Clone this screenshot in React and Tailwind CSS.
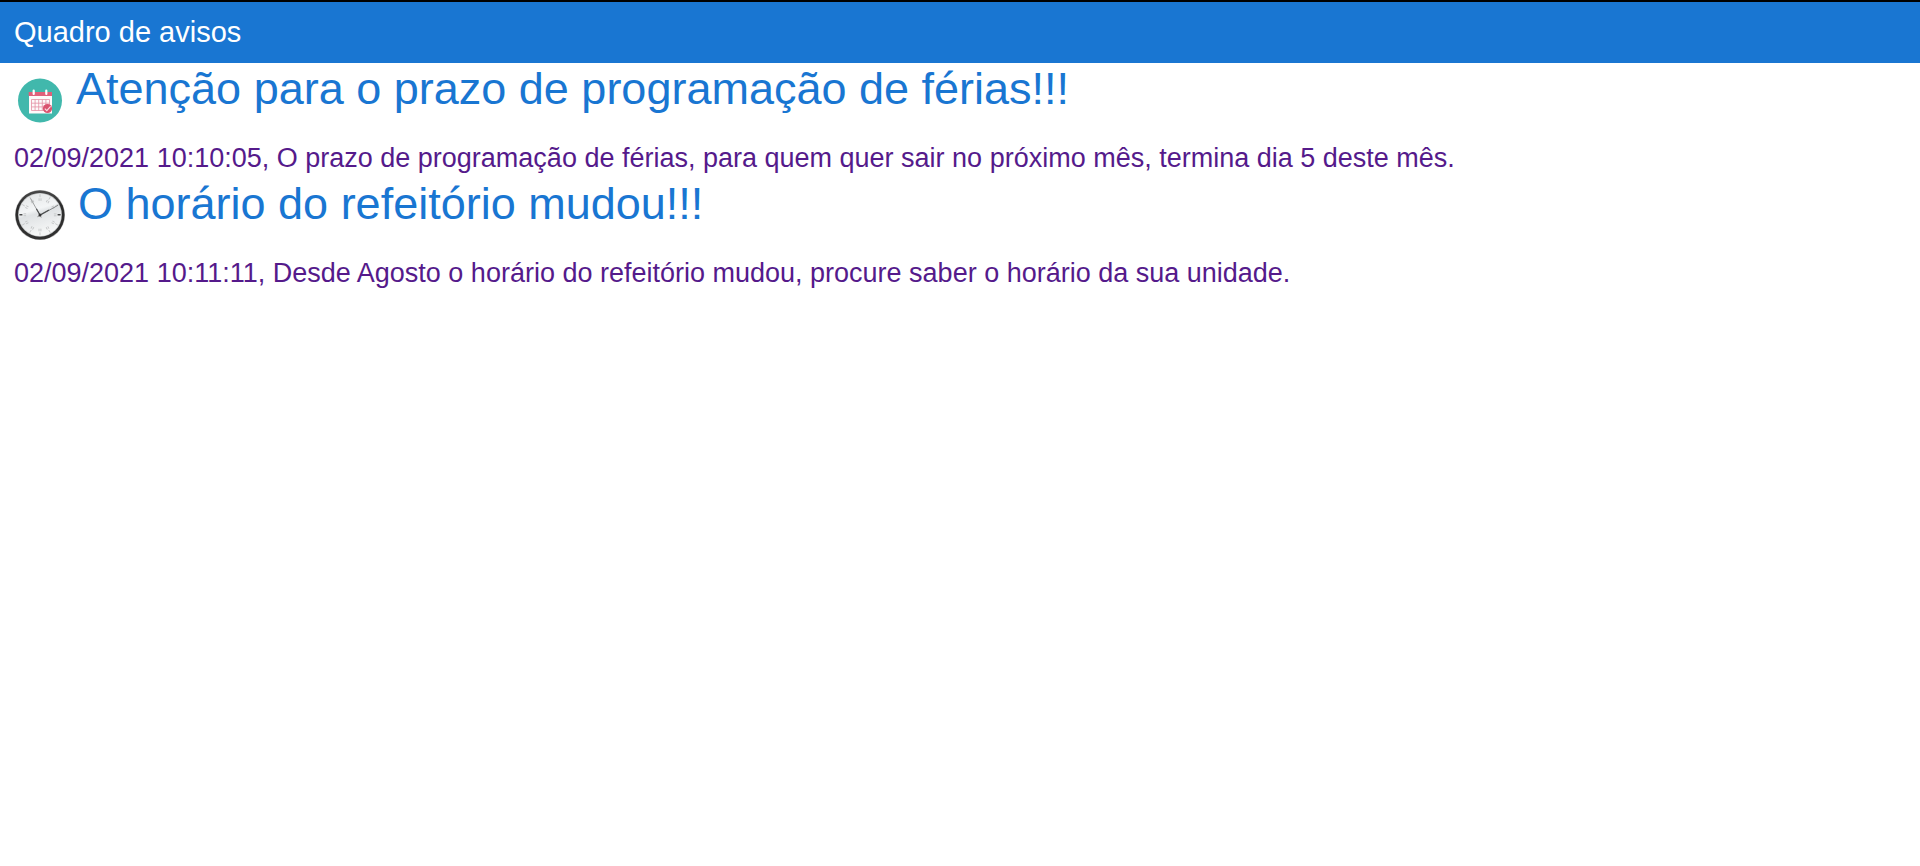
function CalendarIcon() {
  return (
    <svg viewBox="-1 0 50 50" className="mt-3 h-[50px] w-[50px] shrink-0" aria-hidden="true">
      <circle cx="25" cy="25.5" r="22" fill="#41b8ac" />
      <rect x="14" y="17" width="23" height="21.5" fill="#fdfafa" />
      <rect x="13.7" y="17" width="23.3" height="4" fill="#e0607a" />
      <path d="M18.7 15.5v3.5M31.3 15.5v3.5" stroke="#fff" strokeWidth="2.2" strokeLinecap="round" />
      <path
        d="M16.5 24.5h18v11h-18zM16.5 28.2h18M16.5 31.9h18M20.1 24.5v11M23.7 24.5v11M27.3 24.5v11M30.9 24.5v11"
        fill="none"
        stroke="#e591a5"
        strokeWidth=".8"
      />
      <circle cx="32.5" cy="33.5" r="4.6" fill="#d9536f" />
      <path d="M29.8 33.7l2 2 3.8-4.4" fill="none" stroke="#fbdde3" strokeWidth="1.1" />
    </svg>
  );
}

function ClockIcon() {
  const hours = [0, 30, 60, 90, 120, 150, 180, 210, 240, 270, 300, 330];
  return (
    <svg viewBox="-1 0 52 50" className="mt-3 h-[50px] w-[52px] shrink-0" aria-hidden="true">
      <defs>
        <linearGradient id="clock-face" x1="0" y1="0" x2=".3" y2="1">
          <stop offset="0" stopColor="#e2e4e5" />
          <stop offset=".45" stopColor="#f3f5f6" />
          <stop offset=".55" stopColor="#dfe2e4" />
          <stop offset="1" stopColor="#f5f6f6" />
        </linearGradient>
        <linearGradient id="clock-rim" x1="0" y1="0" x2="0" y2="1">
          <stop offset="0" stopColor="#4a4a4a" />
          <stop offset=".3" stopColor="#2b2b2b" />
          <stop offset="1" stopColor="#303030" />
        </linearGradient>
      </defs>
      <circle cx="25" cy="25" r="25" fill="#a8a8a8" />
      <circle cx="25" cy="25" r="24.5" fill="url(#clock-rim)" />
      <circle cx="25" cy="24.8" r="21.9" fill="#bfc1c2" />
      <circle cx="25" cy="24.8" r="21.2" fill="url(#clock-face)" />
      {hours.map((a) => (
        <g key={a} transform={`rotate(${a} 25 24.8)`}>
          <path
            d="M25 4.2v3"
            stroke={a === 90 || a === 270 ? "#111" : "#b9bbbc"}
            strokeWidth={a === 90 || a === 270 ? "1.1" : ".7"}
          />
          <path d="M24.1 8.3v2.6M26 8.3v2.6" stroke="#c2c4c5" strokeWidth=".9" />
        </g>
      ))}
      <path d="M26.3 27.6L15.6 8.5" stroke="#8b8d8e" strokeWidth=".8" />
      <path d="M22.5 26.7L43.2 15.2" stroke="#77797a" strokeWidth=".9" />
      <path d="M25 25L34 20M25 25l-3.6-6.2" stroke="#4c4e4f" strokeWidth="1.2" />
      <circle cx="25" cy="25" r="1.5" fill="#333" />
    </svg>
  );
}

const notices = [
  {
    title: "Atenção para o prazo de programação de férias!!!",
    text: "02/09/2021 10:10:05, O prazo de programação de férias, para quem quer sair no próximo mês, termina dia 5 deste mês.",
    Icon: CalendarIcon,
  },
  {
    title: "O horário do refeitório mudou!!!",
    text: "02/09/2021 10:11:11, Desde Agosto o horário do refeitório mudou, procure saber o horário da sua unidade.",
    Icon: ClockIcon,
  },
];

export default function App() {
  return (
    <div className="min-h-screen bg-white font-['Liberation_Sans',Arial,sans-serif]">
      <header className="border-t-2 border-black bg-[#1976d2] px-3.5 py-3">
        <h1 className="text-[29px] leading-[37px] text-white">Quadro de avisos</h1>
      </header>
      <main className="px-3.5">
        {notices.map(({ title, text, Icon }) => (
          <article key={title} className="pb-0.5">
            <a href="#" className="block">
              <div className="flex gap-3">
                <Icon />
                <h2 className="text-[45px] leading-[52px] text-[#1976d2]">{title}</h2>
              </div>
              <p className="mt-[15px] text-[27px] leading-9 text-[#551a8b]">{text}</p>
            </a>
          </article>
        ))}
      </main>
    </div>
  );
}
